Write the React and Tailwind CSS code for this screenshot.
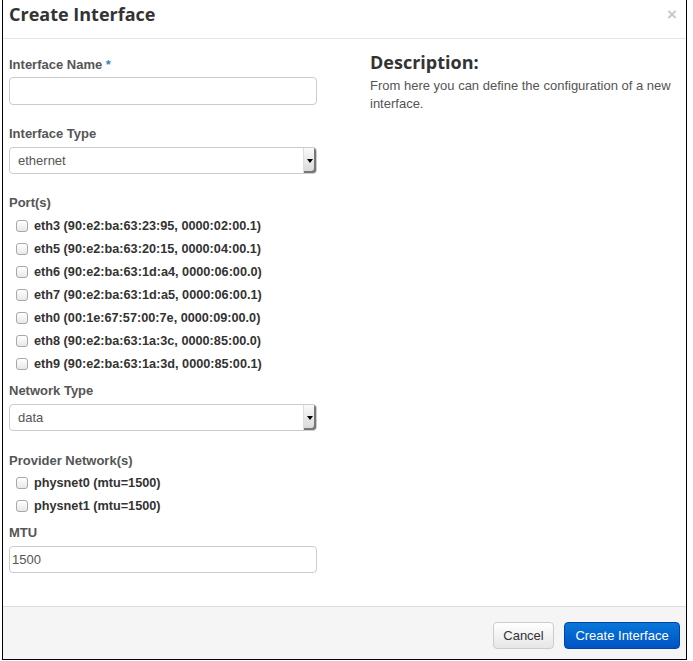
import React from 'react'

const PORTS = [
  'eth3 (90:e2:ba:63:23:95, 0000:02:00.1)',
  'eth5 (90:e2:ba:63:20:15, 0000:04:00.1)',
  'eth6 (90:e2:ba:63:1d:a4, 0000:06:00.0)',
  'eth7 (90:e2:ba:63:1d:a5, 0000:06:00.1)',
  'eth0 (00:1e:67:57:00:7e, 0000:09:00.0)',
  'eth8 (90:e2:ba:63:1a:3c, 0000:85:00.0)',
  'eth9 (90:e2:ba:63:1a:3d, 0000:85:00.1)',
]

const NETS = ['physnet0 (mtu=1500)', 'physnet1 (mtu=1500)']

function Label({ children, required }) {
  return (
    <div className="h-[18px] leading-[18px] text-[13px] font-bold text-[#555]">
      {children}
      {required && <span className="text-[#3a87ad]"> *</span>}
    </div>
  )
}

function Check({ label }) {
  return (
    <label className="flex items-center h-[23px] pl-[7px]">
      <span className="w-[12px] h-[12px] rounded-[3px] border border-[#a8a8a8] bg-gradient-to-b from-white to-[#e8e8e8] shrink-0" />
      <span className="ml-[6px] text-[12.7px] font-bold text-[#333] leading-[18px]">{label}</span>
    </label>
  )
}

function Select({ value }) {
  return (
    <div className="flex items-center h-[27px] w-[308px] rounded-[4px] border border-[#ccc] bg-white">
      <span className="flex-1 pl-[8px] text-[13px] text-[#555]">{value}</span>
      <div className="flex items-center justify-center w-[13px] h-[25px] bg-gradient-to-b from-[#fafafa] to-[#d8d8d8] border-l border-[#ddd] shadow-[inset_-2px_-2px_0_#777] rounded-r-[3px]">
        <span className="w-0 h-0 border-l-[3px] border-r-[3px] border-t-[4px] border-l-transparent border-r-transparent border-t-black -ml-[1px]" />
      </div>
    </div>
  )
}

function Input({ value, h = 'h-[28px]' }) {
  return (
    <div className={`${h} w-[308px] rounded-[4px] border border-[#ccc] bg-white flex items-center pl-[2px] text-[13px] text-[#555]`}>
      {value}
    </div>
  )
}

export default function App() {
  return (
    <div className="w-[693px] h-[661px] bg-white" style={{ fontFamily: '"Liberation Sans", Arial, sans-serif' }}>
      <div className="ml-[2px] w-[685px] h-[660px] border-l border-r border-b border-black flex flex-col">
        <div className="h-[39px] border-b border-[#e5e5e5] flex items-start justify-between pl-[6px] pr-[9px]">
          <h3 className="text-[18px] font-bold text-[#333] leading-[26px] pt-[1px]" style={{ fontFamily: '"Open Sans", sans-serif' }}>
            Create Interface
          </h3>
          <span className="text-[17px] font-bold text-[#c8c8c8] leading-[26px] pt-[2px]">×</span>
        </div>

        <div className="flex flex-1 pl-[6px]">
          <div className="w-[308px] pt-[17px]">
            <Label required>Interface Name</Label>
            <div className="mt-[3px]"><Input value="" /></div>

            <div className="mt-[20px]"><Label>Interface Type</Label></div>
            <div className="mt-[4px]"><Select value="ethernet" /></div>

            <div className="mt-[20px]"><Label>Port(s)</Label></div>
            <div className="mt-[2px]">
              {PORTS.map(p => <Check key={p} label={p} />)}
            </div>

            <div className="mt-[7px]"><Label>Network Type</Label></div>
            <div className="mt-[4px]"><Select value="data" /></div>

            <div className="mt-[21px]"><Label>Provider Network(s)</Label></div>
            <div className="mt-[1px]">
              {NETS.map(p => <Check key={p} label={p} />)}
            </div>

            <div className="mt-[7px]"><Label>MTU</Label></div>
            <div className="mt-[4px]"><Input value="1500" h="h-[27px]" /></div>
          </div>

          <div className="ml-[53px] w-[310px] pt-[10px]">
            <h3 className="text-[18px] font-bold text-[#333] leading-[26px]" style={{ fontFamily: '"Open Sans", sans-serif' }}>
              Description:
            </h3>
            <p className="mt-[2px] text-[13px] leading-[18px] text-[#555]">
              From here you can define the configuration of a new interface.
            </p>
          </div>
        </div>

        <div className="h-[53px] border-t border-[#ddd] bg-[#f5f5f5] flex items-start justify-end gap-[10px] pt-[15px] pr-[6px]">
          <button className="h-[27px] w-[61px] rounded-[4px] border border-[#ccc] bg-gradient-to-b from-white to-[#e6e6e6] text-[13px] text-[#333]">
            Cancel
          </button>
          <button className="h-[27px] w-[116px] rounded-[4px] border border-[#0044aa] bg-gradient-to-b from-[#0b77d8] to-[#0052c4] text-[13px] text-white">
            Create Interface
          </button>
        </div>
      </div>
    </div>
  )
}
